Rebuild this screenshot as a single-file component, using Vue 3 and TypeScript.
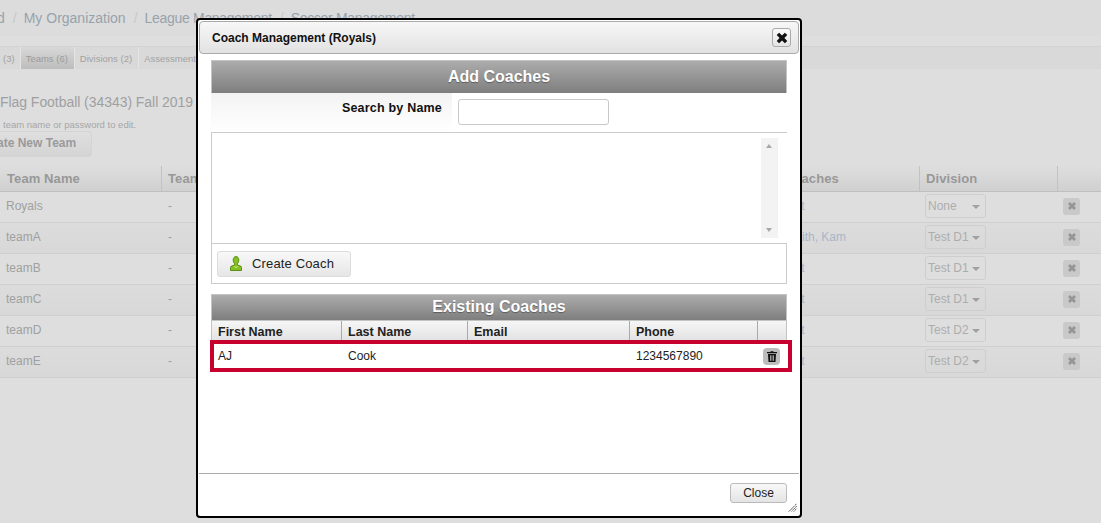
<script setup lang="ts">
const crumbs = ['d', 'My Organization', 'League Management', 'Soccer Management']
const tabs = [
  { label: '(3)', active: false },
  { label: 'Teams (6)', active: true },
  { label: 'Divisions (2)', active: false },
  { label: 'Assessments', active: false },
]
const teams = [
  { name: 'Royals', coach: 'Edit', division: 'None' },
  { name: 'teamA', coach: 'Smith, Kam', division: 'Test D1' },
  { name: 'teamB', coach: 'Edit', division: 'Test D1' },
  { name: 'teamC', coach: 'Edit', division: 'Test D1' },
  { name: 'teamD', coach: 'Edit', division: 'Test D2' },
  { name: 'teamE', coach: 'Edit', division: 'Test D2' },
]
</script>

<template>
  <div class="page">
    <nav class="crumbs">
      <template v-for="(c, i) in crumbs" :key="c">
        <span v-if="i > 0" class="sep">/</span>
        <span :class="{ tight: i > 1 }">{{ c }}</span>
      </template>
    </nav>
    <div class="tabs">
      <span v-for="t in tabs" :key="t.label" class="tab" :class="{ active: t.active }">{{ t.label }}</span>
    </div>
    <h2 class="title">Flag Football (34343) Fall 2019</h2>
    <p class="hint">team name or password to edit.</p>
    <button class="new-team">ate New Team</button>
    <div class="bg-table">
      <div class="bg-row bg-head">
        <span class="c-name">Team Name</span>
        <span class="c-mid">Team</span>
        <span class="c-coach">Coaches</span>
        <span class="c-div">Division</span>
        <span class="c-del"></span>
      </div>
      <div v-for="(t, i) in teams" :key="t.name" class="bg-row body-row" :class="{ odd: i % 2 === 1 }">
        <span class="c-name">{{ t.name }}</span>
        <span class="c-mid">-</span>
        <span class="c-coach link">{{ t.coach }}</span>
        <span class="c-div">
          <span class="sel">{{ t.division }}<i class="caret"></i></span>
        </span>
        <span class="c-del">
          <span class="del">
            <svg width="10" height="10" viewBox="0 0 10 10"><path d="M1 3 3 1 5 3 7 1 9 3 7 5 9 7 7 9 5 7 3 9 1 7 3 5Z" fill="#969696"/></svg>
          </span>
        </span>
      </div>
    </div>

    <section class="modal">
      <header class="modal-title">
        <span>Coach Management (Royals)</span>
        <button class="x-btn" aria-label="Close">
          <svg width="12" height="12" viewBox="0 0 10 10"><path d="M.6 2.600 2.600.6 5 3 7.400.6 9.400 2.600 7 5 9.400 7.400 7.400 9.400 5 7 2.600 9.400.6 7.400 3 5Z" fill="#111"/></svg>
        </button>
      </header>
      <div class="modal-body">
        <h3 class="band add-band">Add Coaches</h3>
        <div class="search">
          <label class="search-label">Search by Name</label>
          <span class="search-field"><input class="search-input" type="text" /></span>
        </div>
        <div class="results">
          <div class="scroll">
            <i class="arrow up"></i>
            <i class="arrow down"></i>
          </div>
        </div>
        <div class="create-box">
          <button class="create-btn">
            <svg width="12" height="15" viewBox="0 0 12 15">
              <path d="M6 .6C4.200.6 3.200 2 3.200 4c0 1.500.6 3 1.400 3.700V9L1 10.300C.6 10.500.5 11 .5 11.500v3h11v-3c0-.5-.1-1-.5-1.200L7.400 9V7.700C8.200 7 8.800 5.500 8.800 4 8.800 2 7.800.6 6 .6Z" fill="#86bf1f" stroke="#4d8a0c" stroke-width=".9"/>
              <path d="M4.400 10 6 11.800 7.600 10" fill="none" stroke="#d6ef9a" stroke-width="1"/>
            </svg>
            <span>Create Coach</span>
          </button>
        </div>
        <h3 class="band exist-band">Existing Coaches</h3>
        <div class="coach-grid coach-head">
          <span>First Name</span>
          <span>Last Name</span>
          <span>Email</span>
          <span>Phone</span>
          <span></span>
        </div>
        <div class="coach-grid coach-row">
          <span>AJ</span>
          <span>Cook</span>
          <span></span>
          <span>1234567890</span>
          <span class="trash-cell">
            <span class="trash">
              <svg width="10" height="11" viewBox="0 0 10 11"><path d="M3.500 1V.3h3V1H10v1.300H0V1ZM1 3h8l-.5 8h-7ZM3 4.200v5.600h.8V4.200Zm1.600 0v5.600h.8V4.200Zm1.600 0v5.600H7V4.200Z" fill="#111" fill-rule="evenodd"/></svg>
            </span>
          </span>
        </div>
        <div class="highlight"></div>
      </div>
      <footer class="modal-foot">
        <button class="close-btn">Close</button>
        <svg class="grip" width="9" height="9" viewBox="0 0 11 11">
          <path d="M10.500 1 1 10.500M10.500 4 4 10.500M10.500 7 7 10.500" stroke="#222" stroke-width="1.200" stroke-dasharray="1.200 .6" fill="none"/>
        </svg>
      </footer>
    </section>
  </div>
</template>

<style>
html, body { margin: 0; background: #dedede; }
</style>

<style scoped>
.page {
  position: relative;
  width: 1101px;
  height: 523px;
  overflow: hidden;
  background: #dedede;
  font-family: "Liberation Sans", Arial, sans-serif;
  color: #999;
}
.crumbs {
  height: 36px;
  margin-left: -3px;
  display: flex;
  align-items: center;
  gap: 6px;
  font-size: 14px;
  color: #98a2ac;
  background: #dcdcdc;
}
.crumbs .sep { color: #c8c8c8; margin: 0 1px 0 2px; }
.crumbs .tight { letter-spacing: -.3px; }
.tabs {
  margin-top: 10px;
  height: 23px;
  display: flex;
  align-items: stretch;
  background: #d9d9d9;
  border-top: 1px solid #d2d2d2;
  box-sizing: border-box;
  font-size: 9.500px;
}
.tab {
  display: flex;
  align-items: center;
  padding: 0 6px 0 5px;
  color: #a2a2a2;
  border-right: 1px solid #e4e4e4;
}
.tab:first-child { padding-left: 3px; padding-right: 5px; }
.tab.active {
  color: #9a9a9a;
  background: linear-gradient(#d8d8d8, #bdbdbd);
}
.title {
  margin: 25px 0 0;
  font-size: 14px;
  line-height: 16px;
  font-weight: 400;
  letter-spacing: -.05px;
  color: #a0a0a0;
}
.hint {
  margin: 9px 0 0 3px;
  font-size: 9.500px;
  line-height: 11px;
  color: #a6a6a6;
}
.new-team {
  display: block;
  width: 95px;
  height: 26px;
  margin: 1px 0 0 -3px;
  padding: 0 15px 2px 0;
  text-align: right;
  white-space: nowrap;
  border: 1px solid #d4d4d4;
  border-left: 0;
  border-radius: 0 4px 4px 0;
  background: linear-gradient(#dfdfdf, #d4d4d4);
  font: 700 12px "Liberation Sans", Arial, sans-serif;
  color: #9a9a9a;
}
.bg-table {
  margin-top: 9px;
  font-size: 12px;
}
.bg-row {
  display: grid;
  grid-template-columns: 162px 618px 140px 138px 43px;
  height: 31px;
  box-sizing: border-box;
  align-items: center;
  border-bottom: 1px solid #cfcfcf;
  color: #a0a0a0;
}
.body-row { padding-bottom: 2px; }
.bg-row.odd { background: linear-gradient(#dcdcdc, #d8d8d8); }
.bg-row > span { padding-left: 6px; }
.bg-head {
  height: 26px;
  align-items: stretch;
  border-bottom: 1px solid #bfbfbf;
  background: linear-gradient(#dedede, #d0d0d0);
  font-size: 13px;
  font-weight: 700;
  letter-spacing: .1px;
  color: #989898;
}
.bg-head > span {
  display: flex;
  align-items: center;
  border-right: 1px solid #c2c2c2;
  padding-left: 6px;
}
.bg-head > span:last-child { border-right: 0; }
.bg-head > .c-name { padding-left: 7px; }
.bg-head > .c-coach { padding-left: 4px; }
.link { color: #a8b6c8; }
.bg-row > .link { padding-left: 4px; }
.body-row > .c-div { padding-left: 5px; }
.body-row > .c-del { padding-left: 5px; }
.sel {
  position: relative;
  display: flex;
  align-items: center;
  width: 61px;
  height: 24px;
  box-sizing: border-box;
  padding-left: 2px;
  border: 1px solid #cecece;
  border-radius: 3px;
  color: #adadad;
}
.caret {
  position: absolute;
  right: 5px;
  top: 10px;
  border-left: 4px solid transparent;
  border-right: 4px solid transparent;
  border-top: 4px solid #a0a0a0;
}
.del {
  display: flex;
  align-items: center;
  justify-content: center;
  width: 17px;
  height: 17px;
  border-radius: 3px;
  background: #c9c9c9;
}

.modal {
  position: absolute;
  left: 196px;
  top: 18px;
  width: 606px;
  height: 500px;
  box-sizing: border-box;
  display: flex;
  flex-direction: column;
  padding: 1px;
  background: #fff;
  border: 2px solid #000;
  border-radius: 4px;
  color: #111;
}
.modal-title {
  height: 33px;
  flex: none;
  box-sizing: border-box;
  display: flex;
  align-items: center;
  justify-content: space-between;
  padding: 0 7px 0 12px;
  border: 1px solid #aaa;
  border-radius: 4px;
  background: linear-gradient(#f7f7f7, #e2e2e2);
  font-size: 12px;
  font-weight: 700;
  color: #111;
}
.x-btn {
  width: 19px;
  height: 19px;
  padding: 0;
  display: flex;
  align-items: center;
  justify-content: center;
  border: 1px solid #aaa;
  border-radius: 3px;
  background: linear-gradient(#fafafa, #e4e4e4);
}
.modal-body {
  position: relative;
  flex: 1;
  padding: 6px 12px 0 12px;
}
.band {
  margin: 0;
  box-sizing: border-box;
  height: 33px;
  display: flex;
  align-items: center;
  justify-content: center;
  background: linear-gradient(#acacac, #7e7e7e);
  border: 1px solid #c4c4c4;
  border-bottom: 0;
  font-size: 16px;
  font-weight: 700;
  color: #fff;
  text-shadow: 0 1px 1px rgba(0, 0, 0, .35);
}
.exist-band { height: 26px; margin-top: 10px; padding-bottom: 2px; }
.search {
  display: grid;
  grid-template-columns: 241px 1fr;
  height: 40px;
  box-sizing: border-box;
  border-bottom: 1px solid #ccc;
}
.search-label {
  display: flex;
  justify-content: flex-end;
  align-items: flex-start;
  padding: 8px 10px 0 0;
  background: linear-gradient(#f3f3f3, #fff);
  font-size: 12.500px;
  font-weight: 700;
  letter-spacing: .2px;
  color: #111;
}
.search-field { padding: 6px 0 0 6px; }
.search-input {
  display: block;
  width: 151px;
  height: 26px;
  box-sizing: border-box;
  border: 1px solid #c8c8c8;
  border-radius: 3px;
  background: #fff;
}
.results {
  height: 110px;
  box-sizing: border-box;
  display: flex;
  justify-content: flex-end;
  padding: 5px 9px 5px 0;
  border-left: 1px solid #ccc;
}
.scroll {
  position: relative;
  width: 17px;
  background: #f3f3f3;
}
.arrow {
  position: absolute;
  left: 5px;
  border-left: 3.500px solid transparent;
  border-right: 3.500px solid transparent;
}
.arrow.up { top: 6px; border-bottom: 4px solid #a8a8a8; }
.arrow.down { bottom: 6px; border-top: 4px solid #a8a8a8; }
.create-box {
  height: 41px;
  box-sizing: border-box;
  padding: 7px 5px;
  border: 1px solid #ccc;
}
.create-btn {
  display: flex;
  align-items: center;
  gap: 10px;
  width: 134px;
  height: 26px;
  box-sizing: border-box;
  padding: 0 0 1px 12px;
  border: 1px solid #ddd;
  border-radius: 3px;
  background: linear-gradient(#f8f8f8, #e6e6e6);
  font: 400 13px "Liberation Sans", Arial, sans-serif;
  letter-spacing: .15px;
  color: #222;
}
.coach-grid {
  display: grid;
  grid-template-columns: 130px 126px 162px 128px 30px;
}
.coach-head {
  height: 23px;
  box-sizing: border-box;
  background: linear-gradient(#f6f6f6, #e0e0e0);
  border: 1px solid #c4c4c4;
  border-bottom: 0;
  font-size: 12.500px;
  font-weight: 700;
  color: #222;
}
.coach-head > span {
  padding: 4px 0 0 6px;
  border-right: 1px solid #aaa;
}
.coach-head > span:last-child { border-right: 0; }
.coach-row {
  height: 26px;
  align-items: center;
  font-size: 12px;
  color: #222;
  box-sizing: border-box;
  padding-left: 1px;
}
.coach-row > span { padding-left: 6px; }
.coach-row > .trash-cell { display: flex; padding-left: 5px; }
.trash {
  display: flex;
  align-items: center;
  justify-content: center;
  width: 17px;
  height: 17px;
  border-radius: 4px;
  background: #bdbdbd;
}
.highlight {
  position: absolute;
  left: 11px;
  top: 286px;
  width: 582px;
  height: 32px;
  box-sizing: border-box;
  border: 4px solid #c8002d;
  pointer-events: none;
}
.modal-foot {
  position: relative;
  height: 42px;
  flex: none;
  box-sizing: border-box;
  border-top: 1px solid #aaa;
  display: flex;
  justify-content: flex-end;
  padding: 9px 12px 0 0;
}
.close-btn {
  width: 57px;
  height: 20px;
  padding: 0;
  border: 1px solid #bbb;
  border-radius: 3px;
  background: linear-gradient(#f8f8f8, #e4e4e4);
  font: 400 12px "Liberation Sans", Arial, sans-serif;
  color: #222;
}
.grip {
  position: absolute;
  right: 2px;
  bottom: 3px;
}
</style>
